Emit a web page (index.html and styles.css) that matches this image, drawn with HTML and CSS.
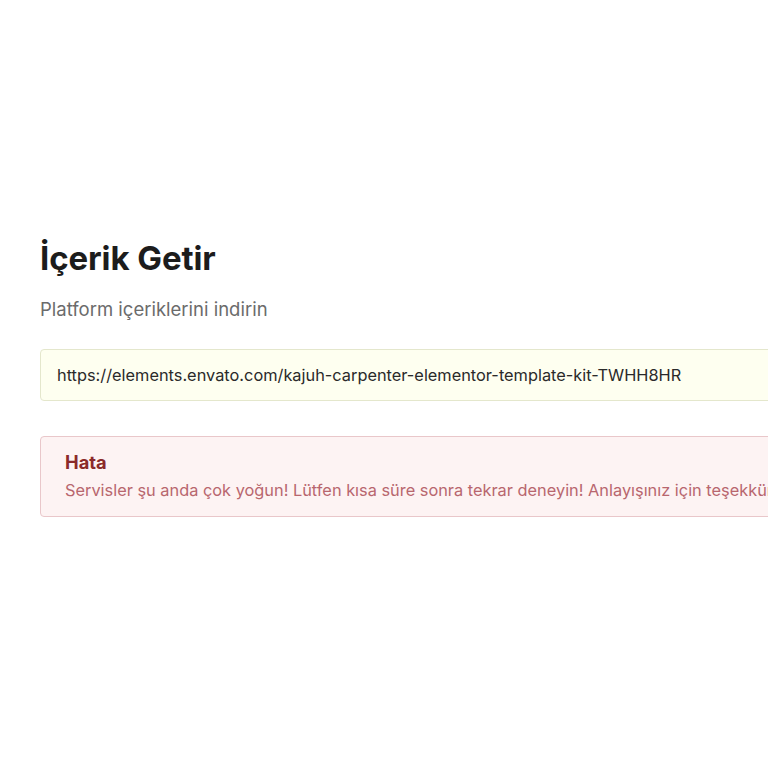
FILE: index.html
```html
<!DOCTYPE html>
<html lang="tr">
<head>
<meta charset="utf-8">
<title>İçerik Getir</title>
<link rel="stylesheet" href="styles.css">
</head>
<body>
<main class="page">
  <section class="panel">
    <h1 class="title">İçerik Getir</h1>
    <p class="subtitle">Platform içeriklerini indirin</p>
    <div class="url-box">https://elements.envato.com/kajuh-carpenter-elementor-template-kit-TWHH8HR</div>
    <div class="alert">
      <div class="alert-title">Hata</div>
      <div class="alert-text">Servisler şu anda çok yoğun! Lütfen kısa süre sonra tekrar deneyin! Anlayışınız için teşekkür ederiz.</div>
    </div>
  </section>
</main>
</body>
</html>
```
FILE: styles.css
```css
html, body {
  margin: 0;
  padding: 0;
  background: #ffffff;
  overflow: hidden;
}
body {
  font-family: Inter, "Noto Sans", sans-serif;
  color: #1f1f1f;
}
.page {
  padding: 236px 0 0 40px;
}
.panel {
  width: 900px;
  display: flex;
  flex-direction: column;
}
.title {
  margin: 0;
  font-size: 33px;
  font-weight: 700;
  line-height: 44px;
  color: #1c1c1c;
  letter-spacing: -0.1px;
}
.subtitle {
  margin: 16px 0 0 0;
  font-size: 18.5px;
  line-height: 26px;
  color: #6b6b6b;
}
.url-box {
  margin-top: 27px;
  height: 52px;
  box-sizing: border-box;
  border: 1px solid #e4e7cc;
  background: #fefff0;
  border-radius: 4px;
  padding: 0 16px;
  display: flex;
  align-items: center;
  font-size: 16.35px;
  color: #2a2a2a;
}
.alert {
  margin-top: 35px;
  box-sizing: border-box;
  height: 81px;
  border: 1px solid #e9c7ca;
  background: #fdf3f3;
  border-radius: 4px;
  padding: 13px 24px 0 24px;
}
.alert-title {
  font-size: 18.3px;
  font-weight: 700;
  line-height: 24px;
  color: #8b2a2a;
}
.alert-text {
  margin-top: 4px;
  font-size: 16.35px;
  line-height: 24px;
  color: #b8666e;
  white-space: nowrap;
}
```
